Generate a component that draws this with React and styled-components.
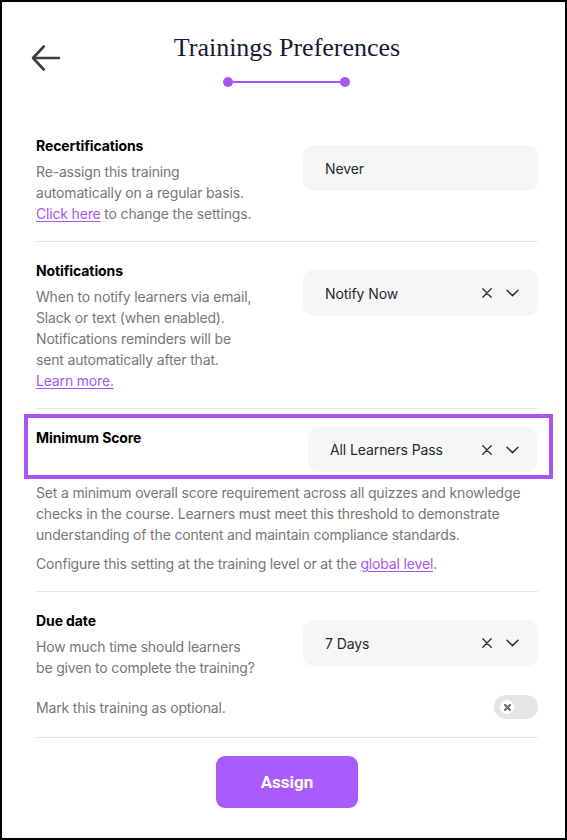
import React from "react";
import styled, { createGlobalStyle } from "styled-components";

const Global = createGlobalStyle`
  html, body { margin: 0; padding: 0; background: #fff; }
  body { font-family: Inter, "Noto Sans", sans-serif; -webkit-font-smoothing: antialiased; }
  * { box-sizing: border-box; }
`;

const Frame = styled.div`
  width: 567px;
  height: 840px;
  border: 2px solid #000;
  background: #fff;
  padding: 0 27px 0 34px;
  display: flex;
  flex-direction: column;
`;

const Header = styled.header`
  display: grid;
  grid-template-columns: 1fr auto 1fr;
  align-items: start;
  padding-top: 31px;
  margin-bottom: 29px;
`;

const BackButton = styled.button`
  border: 0;
  background: none;
  padding: 0;
  margin: 11px 0 0 -5px;
  width: 30px;
  height: 28px;
  cursor: pointer;
  justify-self: start;
  display: flex;
`;

const TitleBlock = styled.div`
  display: flex;
  flex-direction: column;
  align-items: center;
`;

const Title = styled.h1`
  margin: 0;
  font-family: "Liberation Serif", "DejaVu Serif", serif;
  font-weight: 400;
  font-size: 26px;
  line-height: 30px;
  color: #161b33;
`;

const Stepper = styled.div`
  margin-top: 14px;
  width: 127px;
  height: 10px;
  display: flex;
  align-items: center;
`;

const Dot = styled.span`
  width: 10px;
  height: 10px;
  border-radius: 50%;
  background: #a855f7;
  flex: none;
`;

const Line = styled.span`
  flex: 1;
  height: 2px;
  background: #a855f7;
`;

const Section = styled.section`
  padding: ${(p) => p.$top || "19px"} 0 ${(p) => p.$bottom || "17px"};
  border-bottom: 1px solid #e6e6e6;
`;

const Row = styled.div`
  display: grid;
  grid-template-columns: 1fr 235px;
  align-items: start;
`;

const Heading = styled.h2`
  margin: 0;
  font-size: 14px;
  line-height: ${(p) => p.$lh || "20px"};
  font-weight: 700;
  color: #000;
  letter-spacing: -0.1px;
`;

const Desc = styled.p`
  margin: ${(p) => p.$mt || "5px"} 0 0;
  font-size: 14px;
  line-height: 21px;
  color: #777;
  white-space: nowrap;
  letter-spacing: -0.17px;
`;

const Link = styled.a`
  color: #a855f7;
  text-decoration: underline;
  text-underline-offset: 2px;
  cursor: pointer;
`;

const Select = styled.div`
  margin-top: ${(p) => p.$mt || "9px"};
  width: ${(p) => p.$w || "235px"};
  height: ${(p) => p.$h || "46px"};
  justify-self: end;
  background: #f6f6f6;
  border-radius: 10px;
  display: flex;
  align-items: center;
  padding: 0 ${(p) => p.$pr || "19px"} 0 22px;
  font-size: 14px;
  letter-spacing: -0.1px;
  color: #1f2937;
`;

const SelectValue = styled.span`
  flex: 1;
`;

const IconSlot = styled.span`
  display: flex;
  align-items: center;
  justify-content: center;
  width: ${(p) => p.$w}px;
  height: 24px;
  margin-left: ${(p) => p.$ml || 0}px;
  color: #333;
`;

const Highlight = styled.div`
  margin: 5px -15px 0 -12px;
  border: 4px solid #a855f7;
  padding: 9px 12px 3px 8px;
  display: grid;
  grid-template-columns: 1fr 229px;
  align-items: start;
`;

const ToggleRow = styled.div`
  margin-top: 17px;
  display: flex;
  align-items: center;
  justify-content: space-between;
`;

const ToggleText = styled.span`
  font-size: 14px;
  line-height: 21px;
  color: #777;
  letter-spacing: -0.17px;
`;

const Toggle = styled.div`
  width: 44px;
  height: 24px;
  border-radius: 12px;
  background: #e5e5e5;
  display: flex;
  align-items: center;
  padding-left: 6px;
`;

const Knob = styled.span`
  width: 14px;
  height: 14px;
  border-radius: 50%;
  background: #fff;
  display: flex;
  align-items: center;
  justify-content: center;
`;

const Footer = styled.div`
  display: flex;
  justify-content: center;
  padding-top: 18px;
`;

const AssignButton = styled.button`
  width: 142px;
  height: 52px;
  border: 0;
  border-radius: 9px;
  background: #a95bfb;
  color: #fff;
  font-family: Roboto, Inter, sans-serif;
  font-weight: 700;
  font-size: 17px;
  cursor: pointer;
`;

const XIcon = () => (
  <svg width="10" height="10" viewBox="0 0 10 10" fill="none">
    <path d="M0.8 0.8L9.2 9.2M9.2 0.8L0.8 9.2" stroke="#333" strokeWidth="1.4" strokeLinecap="round" />
  </svg>
);

const Chevron = () => (
  <svg width="13" height="8" viewBox="0 0 13 8" fill="none">
    <path d="M1 1.2L6.5 6.6L12 1.2" stroke="#333" strokeWidth="1.5" strokeLinecap="round" strokeLinejoin="round" />
  </svg>
);

const Dropdown = ({ value, clearable = true, ...rest }) => (
  <Select {...rest}>
    <SelectValue>{value}</SelectValue>
    {clearable && (
      <>
        <IconSlot $w={12}><XIcon /></IconSlot>
        <IconSlot $w={14} $ml={12}><Chevron /></IconSlot>
      </>
    )}
  </Select>
);

export default function App() {
  return (
    <>
      <Global />
      <Frame>
        <Header>
          <BackButton aria-label="Back">
            <svg width="30" height="28" viewBox="0 0 30 28" fill="none">
              <path d="M2 14H28M12.8 2.5L2 14L12.8 25.5" stroke="#3d3d3d" strokeWidth="2.6" strokeLinecap="round" strokeLinejoin="round" />
            </svg>
          </BackButton>
          <TitleBlock>
            <Title>Trainings Preferences</Title>
            <Stepper>
              <Dot />
              <Line />
              <Dot />
            </Stepper>
          </TitleBlock>
          <span />
        </Header>

        <Section $top="20px">
          <Row>
            <div>
              <Heading>Recertifications</Heading>
              <Desc>
                Re-assign this training
                <br />
                automatically on a regular basis.
                <br />
                <Link>Click here</Link> to change the settings.
              </Desc>
            </div>
            <Dropdown value="Never" clearable={false} />
          </Row>
        </Section>

        <Section>
          <Row>
            <div>
              <Heading>Notifications</Heading>
              <Desc>
                When to notify learners via email,
                <br />
                Slack or text (when enabled).
                <br />
                Notifications reminders will be
                <br />
                sent automatically after that.
                <br />
                <Link>Learn more.</Link>
              </Desc>
            </div>
            <Dropdown value="Notify Now" />
          </Row>
        </Section>

        <Section $top="0">
          <Highlight>
            <Heading $lh="22px">Minimum Score</Heading>
            <Dropdown value="All Learners Pass" $w="229px" $h="45px" $mt="0" $pr="18px" />
          </Highlight>
          <Desc $mt="3px">
            Set a minimum overall score requirement across all quizzes and knowledge
            <br />
            checks in the course. Learners must meet this threshold to demonstrate
            <br />
            understanding of the content and maintain compliance standards.
          </Desc>
          <Desc $mt="8px">
            Configure this setting at the training level or at the <Link>global level</Link>.
          </Desc>
        </Section>

        <Section $bottom="18px">
          <Row>
            <div>
              <Heading>Due date</Heading>
              <Desc>
                How much time should learners
                <br />
                be given to complete the training?
              </Desc>
            </div>
            <Dropdown value="7 Days" />
          </Row>
          <ToggleRow>
            <ToggleText>Mark this training as optional.</ToggleText>
            <Toggle>
              <Knob>
                <svg width="7" height="7" viewBox="0 0 7 7" fill="none">
                  <path d="M1 1L6 6M6 1L1 6" stroke="#6b6b6b" strokeWidth="2" strokeLinecap="round" />
                </svg>
              </Knob>
            </Toggle>
          </ToggleRow>
        </Section>

        <Footer>
          <AssignButton>Assign</AssignButton>
        </Footer>
      </Frame>
    </>
  );
}
